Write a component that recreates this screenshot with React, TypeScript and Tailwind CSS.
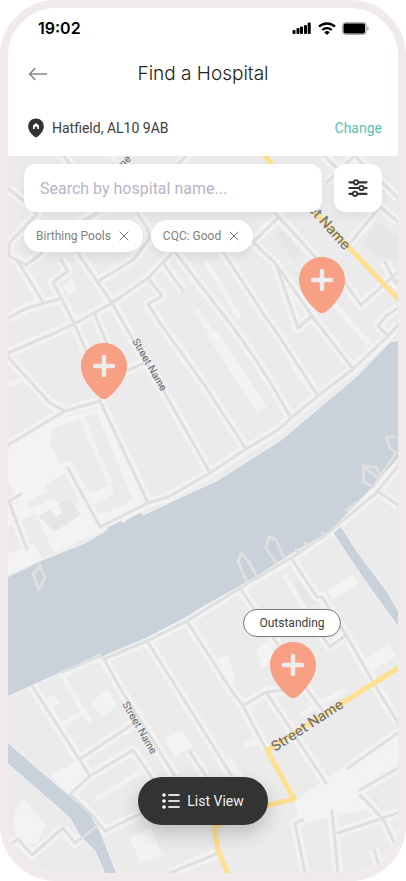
import { useState } from "react";

const roads = [
  "M8 188 L27 204 L37 214 L9 243 V256 L26 265 L37 257 L70 228 L98 212",
  "M64 156 L104 212",
  "M17 260 L43 302",
  "M8 318 L27 308 L59 299",
  "M61 260 L68 271 L53 282 L62 300 L74 323 L87 353",
  "M100 401 L148 503",
  "M8 353 L50 335 L74 324 L112 303 L148 278 L173 252 L203 226",
  "M77 252 L112 303 L135 343 L163 390 L210 473",
  "M95 315 L108 346",
  "M163 263 L183 291",
  "M148 278 L162 296 L148 304 L160 323 L203 383 L246 449",
  "M100 280 L133 260 L150 238 L147 228 L138 214",
  "M175 252 L235 330 L256 360 L270 382 L291 418",
  "M222 250 L266 318 L275 330 L318 396",
  "M253 242 L276 264 L298 328 L312 316 L353 369",
  "M253 242 L279 217 M275 213 L300 240 L316 258",
  "M276 264 L312 316",
  "M345 283 L361 305 L398 272",
  "M350 243 L380 207 L324 156",
  "M327 182 L352 158 M355 156 L398 198 M376 203 L398 222",
  "M385 262 L396 284 L398 280",
  "M178 164 L192 150 M90 218 L120 200",
  "M100 527 L148 503 L168 497 L210 473 L246 449 L278 430 L291 418 L318 396 L353 369 L388 336 L398 325",
  "M388 336 L378 326 L386 316 L398 308",
  "M80 490 L100 527 M68 468 L85 500",
  "M8 502 L21 494 M9 502 L27 549",
  "M8 357 L50 403 L65 411 L100 401 M65 411 L8 445",
  "M104 380 L145 363",
  "M62 672 L100 656 L104 659 L147 641 L187 621 L203 611 L240 588 L291 558 L328 533 L340 523 L376 493 L398 466",
  "M104 659 L120 688 L175 776",
  "M147 641 L178 690 L233 778",
  "M187 621 L231 690 L243 706 L266 749",
  "M243 706 L266 692 L285 690 M266 692 L280 713 L326 783",
  "M300 680 L323 711",
  "M240 588 L278 645",
  "M291 558 L317 597 L322 597 L346 635 L376 687 L398 723",
  "M346 635 L330 647 L313 623",
  "M348 768 L398 733",
  "M360 790 L398 768",
  "M360 795 L383 819 L398 850 M398 813 L338 833",
  "M332 811 L338 873",
  "M303 820 L295 823 L305 873",
  "M374 850 L380 868",
  "M170 873 L216 854",
  "M32 686 L90 776 L70 794 L90 813 L105 831 L140 814",
  "M80 759 L133 724 M90 776 L133 750 L155 782",
  "M190 752 L206 776",
  "M63 828 L32 855 L18 839 L12 843 M63 828 L75 843 L97 826",
  "M379 492 L398 505",
];

const alleys = [
  "M112 156 L140 190",
  "M196 310 L230 360",
  "M283 345 L302 380",
  "M206 262 L240 318",
  "M330 300 L370 344",
  "M8 385 L25 378",
  "M82 418 L110 484",
  "M60 672 L90 722 M62 724 L86 712",
  "M95 800 L140 772",
  "M284 575 L312 620",
  "M245 745 L262 740 M228 758 L250 790",
  "M345 690 L300 715",
];

const openLand = [
  "8,450 62,418 100,408 146,506 100,532 8,575",
  "294,801 326,780 348,764 398,728 398,772 362,796 372,808 300,824",
  "165,738 182,731 192,746 175,758",
  "50,776 78,760 90,776 68,793",
  "12,820 22,798 46,824 36,845 16,838",
  "130,838 150,828 162,855 140,862",
  "215,660 228,655 236,680 226,686",
  "256,648 270,640 276,660 262,668",
  "328,590 352,574 358,584 332,600",
  "365,660 388,645 396,656 372,672",
  "45,700 54,694 60,704 50,710",
  "90,702 108,690 118,706 102,716",
  "64,286 72,279 78,290 68,296",
];

const blocks = [
  "53,428 80,418 110,485 90,494 70,460 60,464 50,442",
  "85,416 97,413 133,500 118,504",
  "45,486 66,472 80,502 70,508 52,500",
  "8,526 36,514 54,553 42,558 34,543 8,554",
  "8,480 20,502 8,510",
  "26,502 50,490 56,498 32,508",
  "92,506 120,490 128,504 102,514",
];

const darkBlocks = [
  "38,516 50,510 56,517 63,512 58,504 70,500 81,514 55,532",
  "291,588 300,580 318,602 308,608",
  "362,245 376,222 398,236 398,260 378,258",
  "275,236 284,230 302,254 294,260",
];

function StreetLabel({ x, y, angle, large = false }: { x: number; y: number; angle: number; large?: boolean }) {
  return (
    <text
      transform={`translate(${x} ${y}) rotate(${angle})`}
      className={large ? "fill-[#757575] text-[14px] font-medium" : "fill-[#666666] text-[10px]"}
    >
      Street Name
    </text>
  );
}

function MapCanvas() {
  return (
    <svg
      viewBox="8 156 390 717"
      preserveAspectRatio="xMidYMid slice"
      className="absolute inset-0 h-full w-full font-['Inter',sans-serif]"
      aria-hidden="true"
    >
      <rect x="8" y="156" width="390" height="717" fill="#ebebeb" />
      <g fill="#f3f3f3">
        {openLand.map((points) => (
          <polygon key={points} points={points} />
        ))}
      </g>
      <g fill="#ebebeb">
        {blocks.map((points) => (
          <polygon key={points} points={points} />
        ))}
      </g>
      <g fill="#e6e6e6">
        {darkBlocks.map((points) => (
          <polygon key={points} points={points} />
        ))}
      </g>
      <g fill="none" stroke="#f2f2f2">
        <path d={alleys.join(" ")} strokeWidth="5" />
        <path d={roads.join(" ")} strokeWidth="10" strokeLinejoin="round" />
        <path d="M212 332 L262 410" strokeWidth="11" />
      </g>

      <g fill="#c9d1db" stroke="#f3f3f3" strokeWidth="1">
        <path d="M7 577 L40 561 L85 543 L107 530 V527 L122 520 L124 523 L127 519 L141 512 L143 515 L218 480 L281 440 L325 403 L355 378 L390 342 L399 340 V457 L373 487 L338 523 L332 530 L293 553 L256 577 L203 607 L185 618 L147 638 L102 657 L100 654 L62 672 L7 697 Z" />
        <path d="M7 742 L70 796 L90 814 L100 831 L117 874 H105 L95 851 L80 836 L70 818 L47 798 L7 763 Z" />
        <path d="M333 533 L341 526 L356 550 L388 593 L399 612 V628 L363 578 Z" />
      </g>

      <g fill="none" stroke="#dfdfdf" strokeWidth="3" strokeLinejoin="round" strokeLinecap="round">
        <path d={roads.join(" ")} />
        <path d="M246 580 L238 562 L241 553 L248 560 L256 575 M276 563 L266 548 L269 537 L276 540 L284 558" />
        <path d="M373 487 L364 482 L363 466 L375 467 L381 475 M364 467 L378 478 M398 437 L386 437 L390 448 L396 453 L373 487" />
        <path d="M39 563 L40 567 L33 574 L39 590 L45 577 L40 567" />
        <path d="M347 510 L356 503 M322 533 L325 537 M305 543 L308 547 M296 549 L298 553" />
      </g>

      <g fill="none" stroke="#ffe08f" strokeWidth="5" strokeLinejoin="round">
        <path d="M263 154 L313 210 L400 301" />
        <path d="M400 667 L267 750 L294 799 L265 806 L214 827 L218 850 L228 874" />
      </g>

      <StreetLabel x={132} y={341} angle={60} />
      <StreetLabel x={122} y={704} angle={60} />
      <StreetLabel x={90} y={201} angle={-45} />
      <StreetLabel x={289} y={189} angle={48} large />
      <StreetLabel x={275} y={752} angle={-33} large />
    </svg>
  );
}

function PinIcon() {
  return (
    <svg viewBox="0 0 46 56" className="h-14 w-[46px]" aria-hidden="true">
      <path
        d="M23 0C10.300 0 0 10.300 0 23c0 8 4 15 9 21.500 3.500 4.600 7 8 10.500 10.500q3.500 2.200 7 0C30 52.500 33.500 49.100 37 44.500 42 38 46 31 46 23 46 10.300 35.700 0 23 0Z"
        fill="#f7a083"
      />
      <path d="M23 14v18M14 23h18" stroke="#ededed" strokeWidth="4.500" strokeLinecap="round" />
    </svg>
  );
}

function StatusBar() {
  return (
    <div className="flex h-10 items-center justify-between pl-[30px] pr-[29px]">
      <span className="font-['Inter',sans-serif] text-base font-semibold leading-5 text-black">19:02</span>
      <div className="flex items-center gap-[6px]">
        <svg viewBox="0 0 20 13" className="h-[13px] w-5" aria-hidden="true">
          <rect x="0.500" y="8" width="3" height="4" rx="1" />
          <rect x="4.500" y="6" width="3" height="6" rx="1" />
          <rect x="8" y="4.500" width="3" height="7.500" rx="1" />
          <rect x="12" y="3" width="3" height="9" rx="1" />
          <rect x="15.700" y="0.500" width="3" height="11.500" rx="1" />
        </svg>
        <svg viewBox="0 0 18 13" className="h-[13px] w-[18px]" fill="none" stroke="black" strokeWidth="2.300" aria-hidden="true">
          <path d="M1 4.700a11.600 11.600 0 0 1 16 0" />
          <path d="M4.200 8a7 7 0 0 1 9.600 0" />
          <path d="M9 13 6.300 10.300a4 4 0 0 1 5.400 0Z" fill="black" stroke="none" />
        </svg>
        <svg viewBox="0 0 27 13" className="h-[13px] w-[27px]" aria-hidden="true">
          <rect x="0.700" y="0.700" width="23.300" height="11.600" rx="3" fill="none" stroke="#b0b0b0" strokeWidth="1.400" />
          <rect x="1.500" y="1.500" width="21.500" height="10" rx="2" />
          <path d="M25.200 4.500v4c1-.4 1.500-1.100 1.500-2s-.5-1.600-1.500-2Z" fill="#a6a6a6" />
        </svg>
      </div>
    </div>
  );
}

function FilterChip({ label, onRemove }: { label: string; onRemove: () => void }) {
  return (
    <button
      type="button"
      onClick={onRemove}
      className="flex h-8 items-center gap-2 rounded-full bg-white pl-3 pr-[14px] text-xs text-[#808080] shadow-[0_4px_12px_rgba(0,0,0,0.08)]"
    >
      {label}
      <svg viewBox="0 0 10 10" className="size-[10px]" stroke="#777777" strokeWidth="1" strokeLinecap="round" aria-hidden="true">
        <path d="m1 1 8 8M9 1 1 9" />
      </svg>
    </button>
  );
}

export default function App() {
  const [query, setQuery] = useState("");
  const [filters, setFilters] = useState(["Birthing Pools", "CQC: Good"]);

  return (
    <div className="bg-white">
      <main className="flex min-h-screen flex-col overflow-hidden rounded-[56px] border-8 border-[#f0eaea] bg-white font-['Roboto',sans-serif] text-[#404040]">
        <header>
          <StatusBar />
          <div className="grid h-[52px] grid-cols-[40px_1fr_40px] items-center px-5">
            <button type="button" aria-label="Back" className="flex h-10 items-center">
              <svg viewBox="0 0 20 14" className="h-[14px] w-5" fill="none" stroke="#888888" strokeWidth="1.600" strokeLinecap="round" strokeLinejoin="round" aria-hidden="true">
                <path d="M18.500 7H2M7 1.500 1.500 7 7 12.500" />
              </svg>
            </button>
            <h1 className="text-center font-['Inter',sans-serif] text-[19px] font-light leading-7 text-[#222222]">Find a Hospital</h1>
          </div>
          <div className="flex h-14 items-center pl-5 pr-4">
            <svg viewBox="0 0 16 20" className="h-5 w-4" aria-hidden="true">
              <path d="M8 .5C3.600.5.200 3.900.200 8.200c0 4.700 3.600 8.500 6.600 10.800q1.200.8 2.400 0c3-2.300 6.600-6.100 6.600-10.800C15.800 3.900 12.400.5 8 .5Z" fill="#333333" />
              <path d="M5 11V7.500L8 5l3 2.500V11H9.300V8.800H6.700V11Z" fill="white" />
            </svg>
            <p className="ml-2 text-sm">Hatfield, AL10 9AB</p>
            <a href="#change" className="ml-auto text-sm text-[#5bbfb5]">
              Change
            </a>
          </div>
        </header>

        <section className="relative flex flex-1 flex-col overflow-hidden" aria-label="Hospital map">
          <MapCanvas />

          <button type="button" aria-label="Hospital in Hatfield west" className="absolute left-[73px] top-[187px]">
            <PinIcon />
          </button>
          <button type="button" aria-label="Hospital in Hatfield north" className="absolute left-[291px] top-[101px]">
            <PinIcon />
          </button>
          <button type="button" aria-label="Hospital rated outstanding" className="absolute left-[262px] top-[486px]">
            <PinIcon />
          </button>
          <span className="absolute left-[235px] top-[453px] flex h-7 w-[98px] items-center justify-center rounded-full border border-[#777777] bg-white text-xs">
            Outstanding
          </span>

          <div className="relative px-4 pt-2">
            <div className="flex gap-3">
              <input
                type="search"
                aria-label="Search by hospital name"
                placeholder="Search by hospital name..."
                value={query}
                onChange={(e) => setQuery(e.target.value)}
                className="h-12 min-w-0 flex-1 rounded-xl bg-white px-4 text-base shadow-[0_4px_12px_rgba(0,0,0,0.06)] outline-none placeholder:text-[#b6b6c9]"
              />
              <button
                type="button"
                aria-label="Filters"
                className="flex size-12 items-center justify-center rounded-xl bg-white shadow-[0_4px_12px_rgba(0,0,0,0.06)]"
              >
                <svg viewBox="0 0 20 18" className="h-[18px] w-5" fill="white" stroke="#333333" strokeWidth="2.200" strokeLinecap="round" aria-hidden="true">
                  <path d="M1.500 3.300h17M1.500 9h17M1.500 14.800h17" />
                  <circle cx="8" cy="3.300" r="2.200" strokeWidth="1.800" />
                  <circle cx="13.500" cy="9" r="2.200" strokeWidth="1.800" />
                  <circle cx="7" cy="14.800" r="2.200" strokeWidth="1.800" />
                </svg>
              </button>
            </div>
            <div className="mt-2 flex flex-wrap gap-2">
              {filters.map((label) => (
                <FilterChip key={label} label={label} onRemove={() => setFilters(filters.filter((f) => f !== label))} />
              ))}
            </div>
          </div>

          <button
            type="button"
            className="relative mx-auto mb-12 mt-auto flex h-12 items-center gap-[7px] rounded-full bg-[#333333] px-6 text-sm text-[#eeeeee] shadow-[0_8px_20px_rgba(0,0,0,0.2)]"
          >
            <svg viewBox="0 0 18 16" className="h-4 w-[18px]" fill="white" aria-hidden="true">
              <circle cx="2" cy="2" r="1.800" />
              <circle cx="2" cy="8" r="1.800" />
              <circle cx="2" cy="14" r="1.800" />
              <path d="M7 2h10M7 8h10M7 14h10" stroke="#dddddd" strokeWidth="1.800" strokeLinecap="round" />
            </svg>
            List View
          </button>
        </section>
      </main>
    </div>
  );
}
